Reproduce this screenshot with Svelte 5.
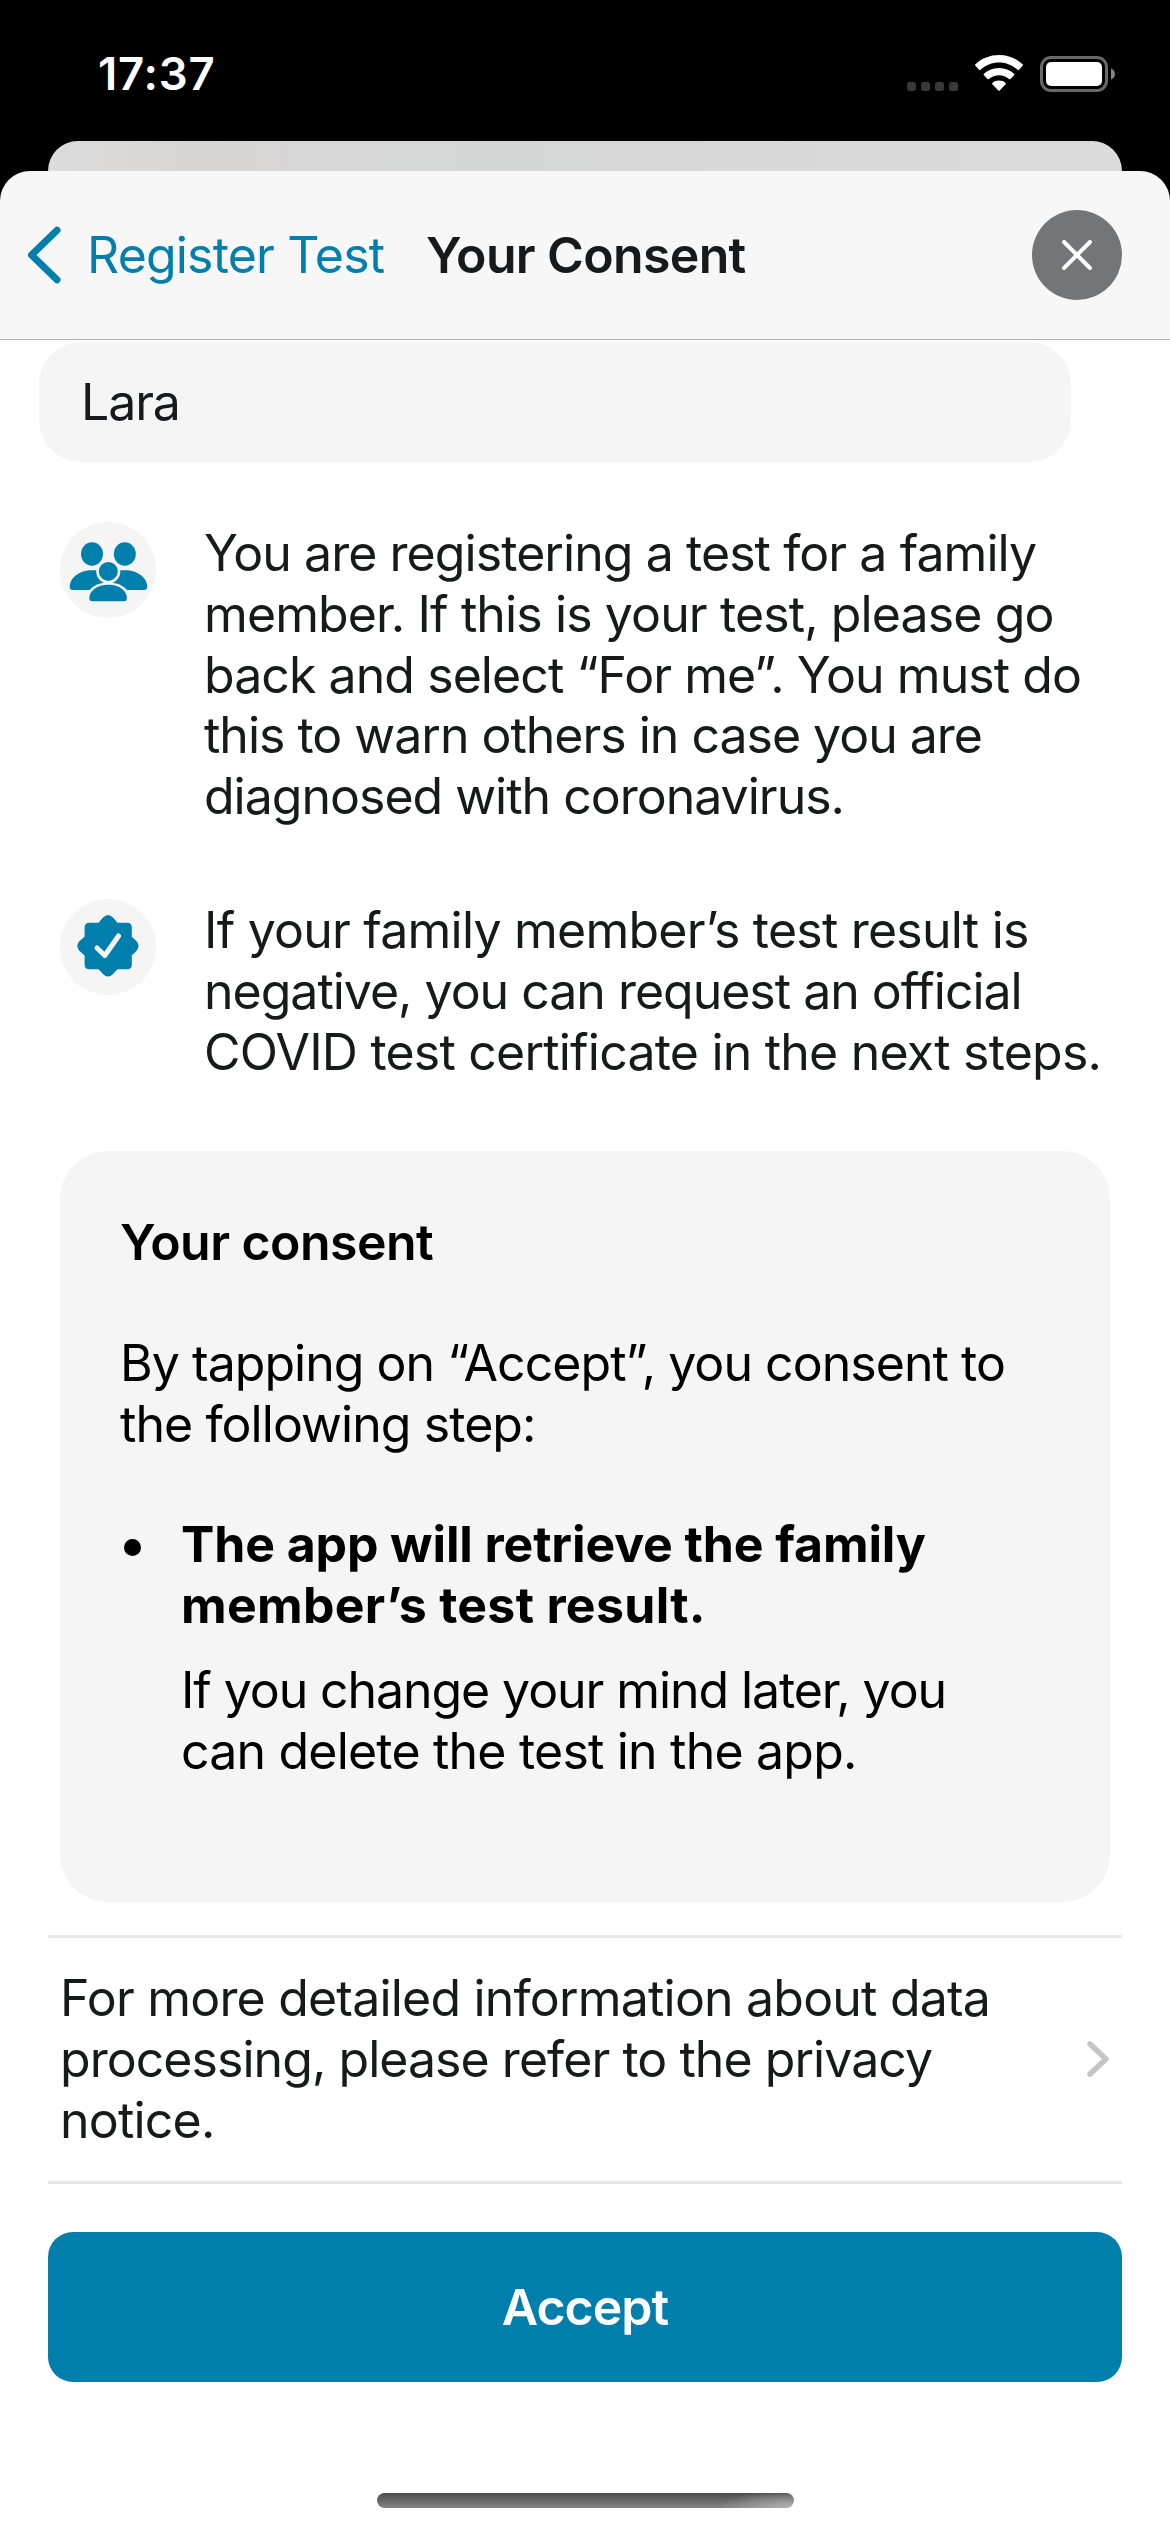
<script>
  const notes = [
    {
      icon: 'family',
      lines: [
        { text: 'You are registering a test for a family', tracking: -0.93 },
        { text: 'member. If this is your test, please go', tracking: -0.89 },
        { text: 'back and select “For me”. You must do', tracking: -0.93 },
        { text: 'this to warn others in case you are', tracking: -1.01 },
        { text: 'diagnosed with coronavirus.', tracking: -1 }
      ]
    },
    {
      icon: 'badge',
      lines: [
        { text: 'If your family member’s test result is', tracking: -0.78 },
        { text: 'negative, you can request an official', tracking: -1.01 },
        { text: 'COVID test certificate in the next steps.', tracking: -0.79 }
      ]
    }
  ];
  const intro = [
    { text: 'By tapping on “Accept”, you consent to', tracking: -0.96 },
    { text: 'the following step:', tracking: -0.93 }
  ];
  const step = [
    { text: 'The app will retrieve the family', tracking: -0.12 },
    { text: 'member’s test result.', tracking: 0.3 }
  ];
  const detail = [
    { text: 'If you change your mind later, you', tracking: -1.09 },
    { text: 'can delete the test in the app.', tracking: -0.8 }
  ];
  const privacy = [
    { text: 'For more detailed information about data', tracking: -0.8 },
    { text: 'processing, please refer to the privacy', tracking: -0.95 },
    { text: 'notice.', tracking: -0.8 }
  ];
</script>

{#snippet copy(lines)}
  {#each lines as line}<span class="line" style:letter-spacing="{line.tracking}px">{line.text}</span>{/each}
{/snippet}

<div class="screen">
  <header class="status">
    <span class="time">17:37</span>
    <div class="signals">
      <svg class="dots" width="51" height="9" viewBox="0 0 51 9" fill="#383838">
        <rect width="9" height="9" rx="2.5" /><rect x="14" width="9" height="9" rx="2.5" />
        <rect x="28" width="9" height="9" rx="2.5" /><rect x="42" width="9" height="9" rx="2.5" />
      </svg>
      <svg width="48" height="36" viewBox="0 0 48 36" fill="#fff">
        <path d="M24 0C33 0 41.500 3.400 47.600 9.300Q48.300 10 47.600 10.700L44 14.800Q43.300 15.500 42.600 14.800C37.500 10.200 31 7.500 24 7.500S10.500 10.200 5.400 14.800Q4.700 15.500 4 14.800L.4 10.700Q-.3 10 .4 9.300C6.500 3.400 15 0 24 0Z" />
        <path d="M24 13C29.800 13 35 15.100 39.100 18.800Q39.700 19.500 39.100 20.200L35.500 24Q34.800 24.700 34.100 24C31.300 21.500 27.800 20.200 24 20.200S16.700 21.500 13.900 24Q13.200 24.700 12.500 24L8.900 20.200Q8.300 19.500 8.900 18.800C13 15.100 18.200 13 24 13Z" />
        <path d="M24 25.500C26.500 25.500 28.800 26.300 30.600 27.900Q31.200 28.500 30.600 29.200L24.700 35.500Q24 36.200 23.300 35.500L17.400 29.200Q16.800 28.500 17.400 27.900C19.200 26.300 21.500 25.500 24 25.500Z" />
      </svg>
      <svg class="battery" width="75" height="36" viewBox="0 0 75 36">
        <rect x="1.500" y="1.500" width="65" height="33" rx="9.500" fill="none" stroke="#696969" stroke-width="3" />
        <rect x="6" y="6" width="56" height="24" rx="5" fill="#fff" />
        <path d="M71 12.500C76.300 14.500 76.300 21.500 71 23.500Z" fill="#858585" />
      </svg>
    </div>
  </header>

  <div class="backdrop"></div>

  <main class="sheet">
    <nav>
      <svg class="back" width="35" height="58" viewBox="0 0 35 58"><path d="M30 4.200L4.500 29L30 53.800" fill="none" stroke="#007fad" stroke-width="7" stroke-linecap="round" stroke-linejoin="round" /></svg>
      <span class="parent">Register Test</span>
      <h1>Your Consent</h1>
      <button class="close" aria-label="Close">
        <svg width="30" height="30" viewBox="0 0 30 30"><path d="M2 2L28 28M28 2L2 28" stroke="#fff" stroke-width="4" stroke-linecap="round" /></svg>
      </button>
    </nav>

    <div class="field">Lara</div>

    <section class="notes">
      {#each notes as note}
        <div class="note">
          <svg width="96" height="96" viewBox="0 0 96 96">
            <circle cx="48" cy="48" r="48" fill="#f5f5f5" />
            {#if note.icon === 'family'}
              <g fill="#007fad">
                <ellipse cx="32" cy="32" rx="11" ry="11.700" /><ellipse cx="64.800" cy="32" rx="11" ry="11.700" />
                <path d="M9.700 65C9.700 56 19 48.300 32 48.300H65C78 48.300 87.200 56 87.200 65Q87.200 68 84 68H13Q9.700 68 9.700 65Z" />
                <circle cx="48.300" cy="49.400" r="12" fill="#f5f5f5" />
                <path d="M27 79C25.500 67 36 60.500 48.300 60.500S71 67 69.500 79Z" fill="#f5f5f5" />
                <circle cx="48.300" cy="49.400" r="9.500" />
                <path d="M29.300 76C29.300 69 37 62.700 48.300 62.700S66.900 69 66.900 76Q66.900 79.300 64 79.300H32.200Q29.300 79.300 29.300 76Z" />
              </g>
            {:else}
              <path d="M43 18.500Q48 13.500 53 18.500L57.500 23.700H67Q71.800 23.700 71.800 28.500V37.700L76.800 42.500Q80.200 47 76.800 51.500L71.800 56.500V65.500Q71.800 70.300 67 70.300H57.500L53 75Q48 80 43 75L38.500 70.300H29.400Q24.600 70.300 24.600 65.500V56.500L19 51.500Q15.800 47 19 42.500L24.600 37.700V28.500Q24.600 23.700 29.400 23.700H38.500Z" fill="#007fad" />
              <path d="M37 49L44.800 56.500L58.500 37" fill="none" stroke="#f5f5f5" stroke-width="5" stroke-linecap="round" stroke-linejoin="round" />
            {/if}
          </svg>
          <p>{@render copy(note.lines)}</p>
        </div>
      {/each}
    </section>

    <section class="card">
      <h2>Your consent</h2>
      <p>{@render copy(intro)}</p>
      <ul>
        <li>
          <i class="bullet"></i>
          <div>
            <strong>{@render copy(step)}</strong>
            <p>{@render copy(detail)}</p>
          </div>
        </li>
      </ul>
    </section>

    <div class="privacy">
      <p>{@render copy(privacy)}</p>
      <svg width="24" height="38" viewBox="0 0 24 38"><path d="M4 4L20 19L4 34" fill="none" stroke="#c5c5c7" stroke-width="5.500" stroke-linecap="round" stroke-linejoin="round" /></svg>
    </div>

    <button class="accept">Accept</button>
    <div class="home"></div>
  </main>
</div>

<style>
  :global(body) { margin: 0; background: #000; }
  .screen {
    box-sizing: border-box;
    width: 1170px;
    height: 2532px;
    overflow: hidden;
    display: flex;
    flex-direction: column;
    background: #000;
    color: #17191a;
    font: 400 50px/60.8px Inter, "Liberation Sans", sans-serif;
  }
  h1, h2, p, ul { margin: 0; padding: 0; font: inherit; list-style: none; }
  svg { display: block; flex: none; }
  button { border: 0; padding: 0; font: inherit; }
  .line { display: block; white-space: nowrap; }

  .status { height: 141px; flex: none; display: flex; justify-content: space-between; color: #fff; }
  .time { padding: 44px 0 0 98px; font-size: 45.500px; font-weight: 600; letter-spacing: 0.8px; }
  .signals { display: flex; align-items: flex-start; padding: 55px 55px 0 0; }
  .dots { margin: 27px 17px 0 0; }
  .battery { margin: 1px 0 0 17px; }

  .backdrop {
    height: 30px;
    flex: none;
    margin: 0 48px;
    border-radius: 30px 30px 0 0;
    background: linear-gradient(90deg, #dcdcdc, #d9d5d4 13%, #d7d7d7 25%, #d5d7d6 43%, #d7d7d7 55%, #dbdbdb);
  }
  .sheet {
    flex: 1;
    display: flex;
    flex-direction: column;
    background: linear-gradient(#000 0 40px, #fff 40px);
  }
  nav {
    box-sizing: border-box;
    height: 169px;
    flex: none;
    display: flex;
    align-items: center;
    padding: 0 48px 0 27px;
    border-bottom: 1px solid #b2b2b2;
    border-radius: 30px 30px 0 0;
    background: #f7f7f7;
  }
  .parent { width: 339px; margin-left: 25px; color: #007fad; white-space: nowrap; letter-spacing: -0.82px; }
  h1 { font-weight: 600; white-space: nowrap; letter-spacing: -0.65px; }
  .close {
    width: 90px;
    height: 90px;
    margin-left: auto;
    display: grid;
    place-items: center;
    border-radius: 50%;
    background: #747577;
  }

  .field {
    box-sizing: border-box;
    width: 1032px;
    height: 120px;
    flex: none;
    margin: 2px 0 0 39px;
    padding: 30px 42px;
    border-radius: 42px;
    background: #f5f5f5;
    letter-spacing: -1.1px;
  }
  .notes { display: flex; flex-direction: column; gap: 72px; margin: 60px 0 0 60px; }
  .note { display: flex; gap: 48px; }
  .note p { padding-top: 1px; }

  .card {
    box-sizing: border-box;
    width: 1050px;
    height: 751px;
    flex: none;
    margin: 68.600px 0 0 60px;
    padding: 61px 60px 0;
    border-radius: 48px;
    background: #f5f5f5;
    color: #000;
  }
  h2 { margin-bottom: 60px; font-weight: 600; letter-spacing: -0.55px; }
  ul { margin-top: 60px; }
  li { display: flex; }
  .bullet { width: 17px; height: 17px; flex: none; margin: 25px 40px 0 4px; border-radius: 50%; background: #000; }
  strong { display: block; margin-bottom: 24px; font-weight: 700; }

  .privacy {
    box-sizing: border-box;
    height: 249px;
    flex: none;
    display: flex;
    align-items: center;
    justify-content: space-between;
    margin: 33px 48px 0;
    padding: 0 12px;
    border: solid #e8e8e8;
    border-width: 3px 0;
  }
  .accept {
    height: 150px;
    flex: none;
    margin: 48px 48px 0;
    border-radius: 25px;
    background: #007fad;
    color: #fff;
    font-weight: 600;
    letter-spacing: -1px;
  }
  .home {
    width: 417px;
    height: 15px;
    margin: 111px auto 0;
    border-radius: 8px;
    background:
      radial-gradient(75px 18px at 100% 100%, rgb(185 185 185 / 0.9), rgb(150 150 150 / 0)),
      linear-gradient(#4b4b4b, #858585);
  }
</style>
